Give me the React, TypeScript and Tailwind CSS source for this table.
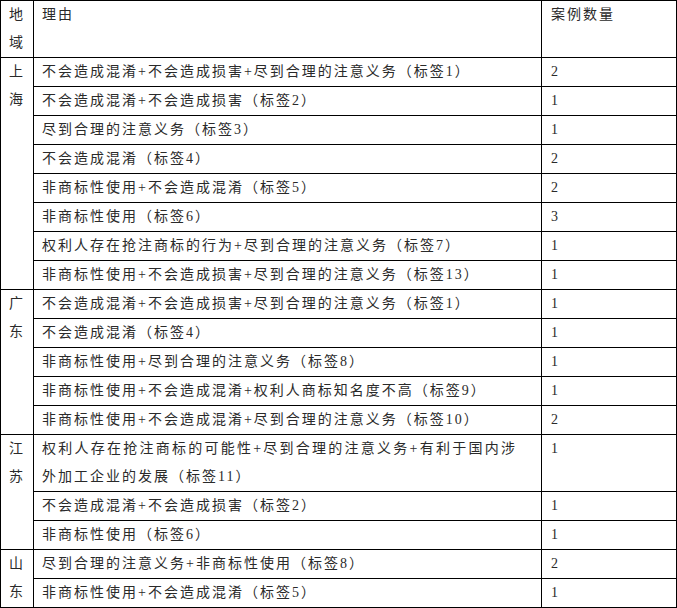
import React from 'react';

type Row = { reason: string; count: number };
type Group = { region: string; rows: Row[] };

const groups: Group[] = [
  {
    region: '上海',
    rows: [
      { reason: '不会造成混淆+不会造成损害+尽到合理的注意义务（标签1）', count: 2 },
      { reason: '不会造成混淆+不会造成损害（标签2）', count: 1 },
      { reason: '尽到合理的注意义务（标签3）', count: 1 },
      { reason: '不会造成混淆（标签4）', count: 2 },
      { reason: '非商标性使用+不会造成混淆（标签5）', count: 2 },
      { reason: '非商标性使用（标签6）', count: 3 },
      { reason: '权利人存在抢注商标的行为+尽到合理的注意义务（标签7）', count: 1 },
      { reason: '非商标性使用+不会造成损害+尽到合理的注意义务（标签13）', count: 1 },
    ],
  },
  {
    region: '广东',
    rows: [
      { reason: '不会造成混淆+不会造成损害+尽到合理的注意义务（标签1）', count: 1 },
      { reason: '不会造成混淆（标签4）', count: 1 },
      { reason: '非商标性使用+尽到合理的注意义务（标签8）', count: 1 },
      { reason: '非商标性使用+不会造成混淆+权利人商标知名度不高（标签9）', count: 1 },
      { reason: '非商标性使用+不会造成混淆+尽到合理的注意义务（标签10）', count: 2 },
    ],
  },
  {
    region: '江苏',
    rows: [
      {
        reason: '权利人存在抢注商标的可能性+尽到合理的注意义务+有利于国内涉外加工企业的发展（标签11）',
        count: 1,
      },
      { reason: '不会造成混淆+不会造成损害（标签2）', count: 1 },
      { reason: '非商标性使用（标签6）', count: 1 },
    ],
  },
  {
    region: '山东',
    rows: [
      { reason: '尽到合理的注意义务+非商标性使用（标签8）', count: 2 },
      { reason: '非商标性使用+不会造成混淆（标签5）', count: 1 },
    ],
  },
];

const cell = 'border border-black align-top leading-[28px] py-0';

export default function App() {
  return (
    <div className="bg-white w-[677px] h-[608px] overflow-hidden font-['Liberation_Serif','Noto_Sans_CJK_SC',serif] text-[14px] tracking-[2px] text-[#2a2a2a]">
      <table className="table-fixed border-collapse w-[676px]">
        <colgroup>
          <col className="w-[33px]" />
          <col className="w-[508px]" />
          <col className="w-[135px]" />
        </colgroup>
        <thead>
          <tr>
            <th className={`${cell} font-normal text-left pl-[8px] pr-0`}>地域</th>
            <th className={`${cell} font-normal text-left pl-[8px] pr-[24px]`}>理由</th>
            <th className={`${cell} font-normal text-left pl-[9px] pr-0`}>案例数量</th>
          </tr>
        </thead>
        <tbody>
          {groups.map((g) =>
            g.rows.map((r, i) => (
              <tr key={g.region + i}>
                {i === 0 && (
                  <td rowSpan={g.rows.length} className={`${cell} pl-[8px] pr-0`}>
                    {g.region}
                  </td>
                )}
                <td className={`${cell} pl-[8px] pr-[24px] text-justify`}>{r.reason}</td>
                <td className={`${cell} pl-[9px] pr-0`}>{r.count}</td>
              </tr>
            ))
          )}
        </tbody>
      </table>
    </div>
  );
}
